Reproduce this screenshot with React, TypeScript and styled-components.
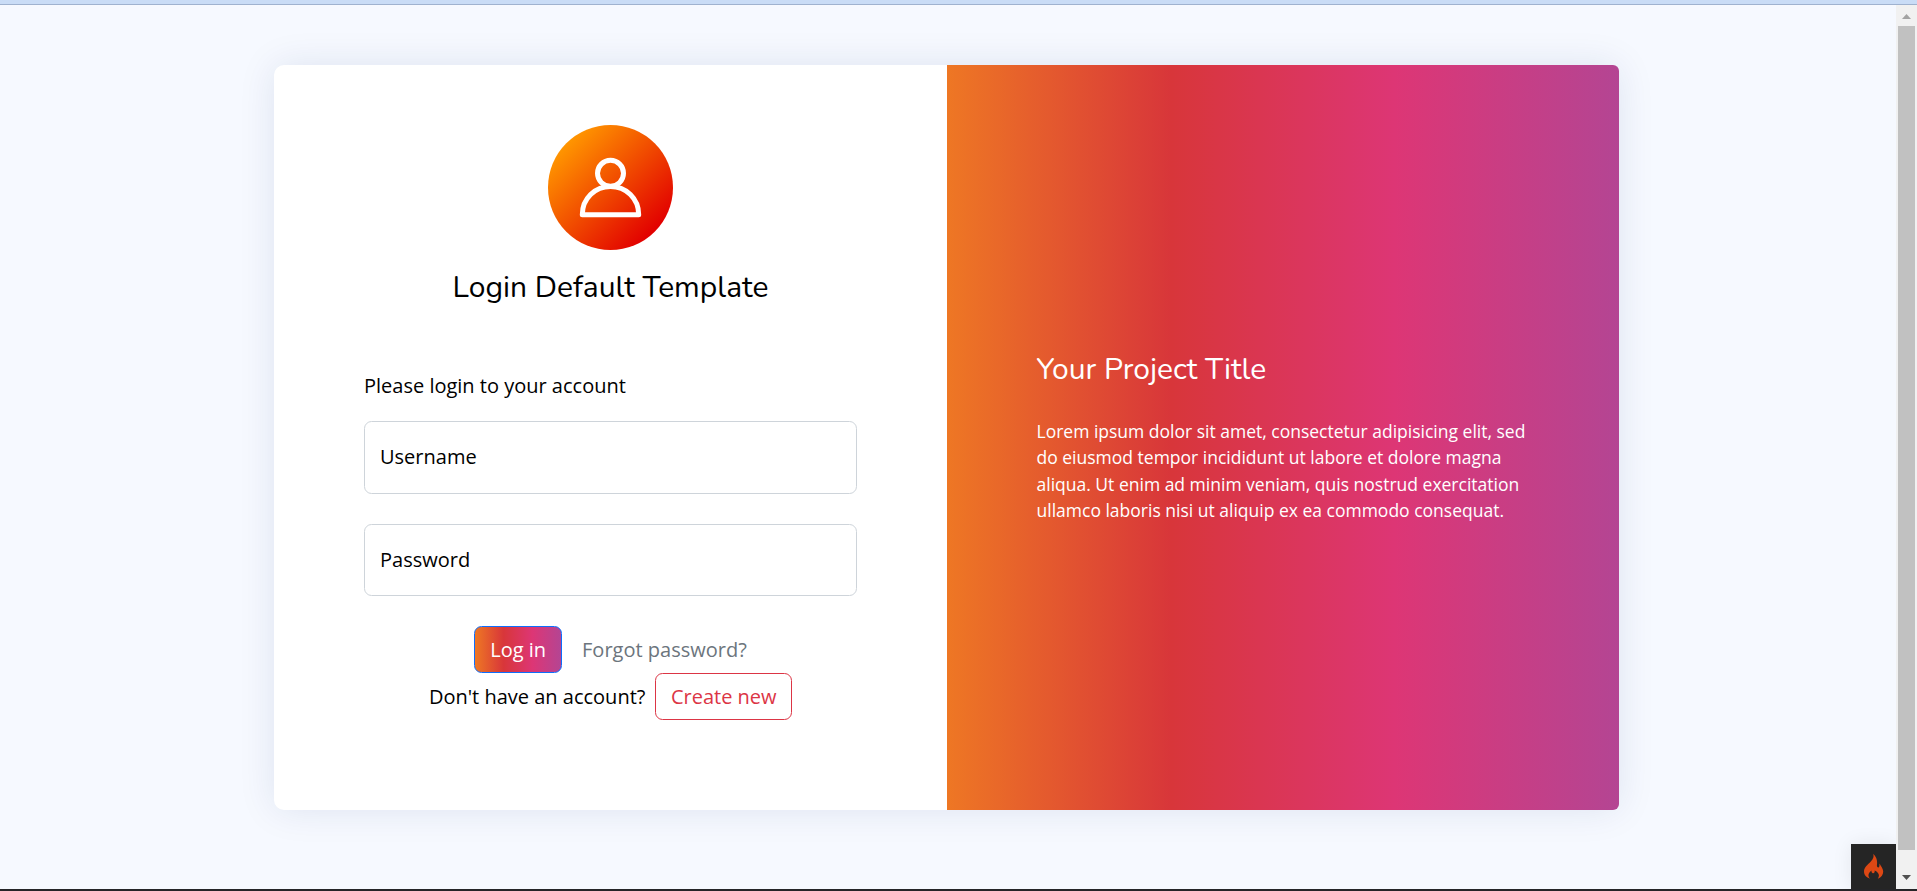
import React from 'react';
import styled, { createGlobalStyle } from 'styled-components';

const GlobalStyle = createGlobalStyle`
  *, *::before, *::after { box-sizing: border-box; }
  body {
    margin: 0;
    overflow: hidden;
    background: #f6f9ff;
    color: #000;
    font: 400 20px/30px 'Open Sans', sans-serif;
  }
`;

const brandGradient = 'linear-gradient(to right, #ee7724, #d8363a, #dd3675, #b44593)';

const Window = styled.div`
  display: flex;
  flex-direction: column;
  height: 891px;
  border-bottom: 2px solid #252528;
`;

const TopStrip = styled.div`
  flex: 0 0 5px;
  background: #c9dcf6;
  border-bottom: 1px solid #9fb2cf;
`;

const Viewport = styled.div`
  display: flex;
  flex: 1;
  min-height: 0;
`;

const Page = styled.main`
  position: relative;
  display: flex;
  flex: 1;
  justify-content: center;
  align-items: flex-start;
  padding: 60px 3px 0 0;
  overflow: hidden;
`;

const Card = styled.section`
  display: grid;
  grid-template-columns: 673px 672px;
  width: 1345px;
  height: 745px;
  border-radius: 10px;
  background: #fff;
  box-shadow: 0 0 37.5px rgba(1, 41, 112, 0.1);
`;

const LoginPane = styled.div`
  display: flex;
  flex-direction: column;
  padding: 60px 90px;
`;

const Brand = styled.header`
  display: flex;
  flex-direction: column;
  align-items: center;
`;

const Heading = styled.h4`
  margin: 0;
  font: 400 30px/36px Nunito, Lato, sans-serif;
  white-space: nowrap;
`;

const BrandHeading = styled(Heading)`
  margin-top: 20px;
`;

const Form = styled.form`
  display: flex;
  flex-direction: column;
  margin-top: 65px;
`;

const Prompt = styled.p`
  margin: 0 0 20px;
`;

const Field = styled.label`
  display: flex;
  align-items: center;
  height: 72.5px;
  margin-bottom: 30px;
  padding: 0 15px;
  border: 1px solid #ced4da;
  border-radius: 7.5px;
`;

const Row = styled.div<{ $gap: number }>`
  display: flex;
  justify-content: center;
  align-items: center;
  gap: ${(p) => p.$gap}px;
  height: 47px;
`;

const Button = styled.button<{ $primary?: boolean }>`
  height: 47px;
  padding: 0 15px;
  border: 1px solid ${(p) => (p.$primary ? '#0d6efd' : '#dc3545')};
  border-radius: 7.5px;
  background: ${(p) => (p.$primary ? brandGradient : 'transparent')};
  color: ${(p) => (p.$primary ? '#fff' : '#dc3545')};
  font: inherit;
  white-space: nowrap;
`;

const CreateButton = styled(Button)`
  padding: 0 14.5px;
`;

const ForgotLink = styled.a`
  color: #6c757d;
`;

const InfoPane = styled.div`
  display: flex;
  flex-direction: column;
  justify-content: center;
  padding: 0 89.5px;
  border-radius: 0 6px 6px 0;
  background: ${brandGradient};
  color: #fff;
`;

const InfoText = styled.p`
  margin: 30px 0 0;
  font-size: 17.5px;
  line-height: 26.25px;
  white-space: nowrap;
`;

const DebugBadge = styled.div`
  position: absolute;
  right: 0;
  bottom: 0;
  display: flex;
  justify-content: center;
  align-items: center;
  width: 45px;
  height: 45px;
  background: #252525;
  box-shadow: 0 0 20px rgba(0, 0, 0, 0.08);
`;

const ScrollBar = styled.div`
  display: flex;
  flex-direction: column;
  align-items: center;
  width: 21px;
  background: #f1f1f1;
`;

const ScrollArrow = styled.svg`
  width: 21px;
  height: 21px;
`;

const ScrollThumb = styled.div`
  width: 17px;
  height: 824px;
  margin-bottom: auto;
  background: #c1c1c1;
`;

const Avatar = () => (
  <svg width="125" height="125" viewBox="0 0 125 125">
    <defs>
      <linearGradient id="avatar" x1="0.15" y1="0.15" x2="0.85" y2="0.85">
        <stop offset="0" stopColor="#ff9500" />
        <stop offset="1" stopColor="#e20000" />
      </linearGradient>
    </defs>
    <circle cx="62.5" cy="62.5" r="62.5" fill="url(#avatar)" />
    <g fill="none" stroke="#fff" strokeWidth="5" strokeLinejoin="round">
      <circle cx="62.5" cy="48.3" r="13" />
      <path d="M34.3 89.7 C34.3 73.5 47 61.5 62.5 61.5 S90.7 73.5 90.7 89.7 Z" />
    </g>
  </svg>
);

const Flame = () => (
  <svg width="35" height="35" viewBox="0 0 35 35">
    <path
      fill="#dd4814"
      d="M17.2 5 C18.2 7.6 17.2 10 14.6 12.8 C11.4 16 8 18.4 8 22.6 C8 26 10.4 28.6 14 29.7 C11.2 27 12.6 23.4 15.6 21.6 C15.2 23.2 15.8 24 16.8 24.2 C18.4 24.4 19 23.2 18.6 21.6 C21.8 22.6 24.6 26.4 21.8 29.7 C25.4 28.2 27.4 25.4 27.2 22.2 C27 19.4 24.8 17.4 23.6 14.6 C23.2 16.4 23.8 17.6 22.8 18.2 C21.4 19 20.6 17.6 21 15.6 C21.6 12 20.4 7.4 17.2 5 Z"
    />
  </svg>
);

export default function App() {
  return (
    <Window>
      <GlobalStyle />
      <TopStrip />
      <Viewport>
        <Page>
          <Card>
            <LoginPane>
              <Brand>
                <Avatar />
                <BrandHeading>Login Default Template</BrandHeading>
              </Brand>
              <Form>
                <Prompt>Please login to your account</Prompt>
                <Field>Username</Field>
                <Field>Password</Field>
                <Row $gap={20}>
                  <Button type="button" $primary>Log in</Button>
                  <ForgotLink>Forgot password?</ForgotLink>
                </Row>
                <Row $gap={10}>
                  <span>Don't have an account?</span>
                  <CreateButton type="button">Create new</CreateButton>
                </Row>
              </Form>
            </LoginPane>
            <InfoPane>
              <Heading>Your Project Title</Heading>
              <InfoText>
                Lorem ipsum dolor sit amet, consectetur adipisicing elit, sed<br />
                do eiusmod tempor incididunt ut labore et dolore magna<br />
                aliqua. Ut enim ad minim veniam, quis nostrud exercitation<br />
                ullamco laboris nisi ut aliquip ex ea commodo consequat.
              </InfoText>
            </InfoPane>
          </Card>
          <DebugBadge>
            <Flame />
          </DebugBadge>
        </Page>
        <ScrollBar>
          <ScrollArrow viewBox="0 0 21 21">
            <path d="M6 14 L10.5 9 L15 14 Z" fill="#a3a3a3" />
          </ScrollArrow>
          <ScrollThumb />
          <ScrollArrow viewBox="0 0 21 21">
            <path d="M6 7 L10.5 12 L15 7 Z" fill="#505050" />
          </ScrollArrow>
        </ScrollBar>
      </Viewport>
    </Window>
  );
}
